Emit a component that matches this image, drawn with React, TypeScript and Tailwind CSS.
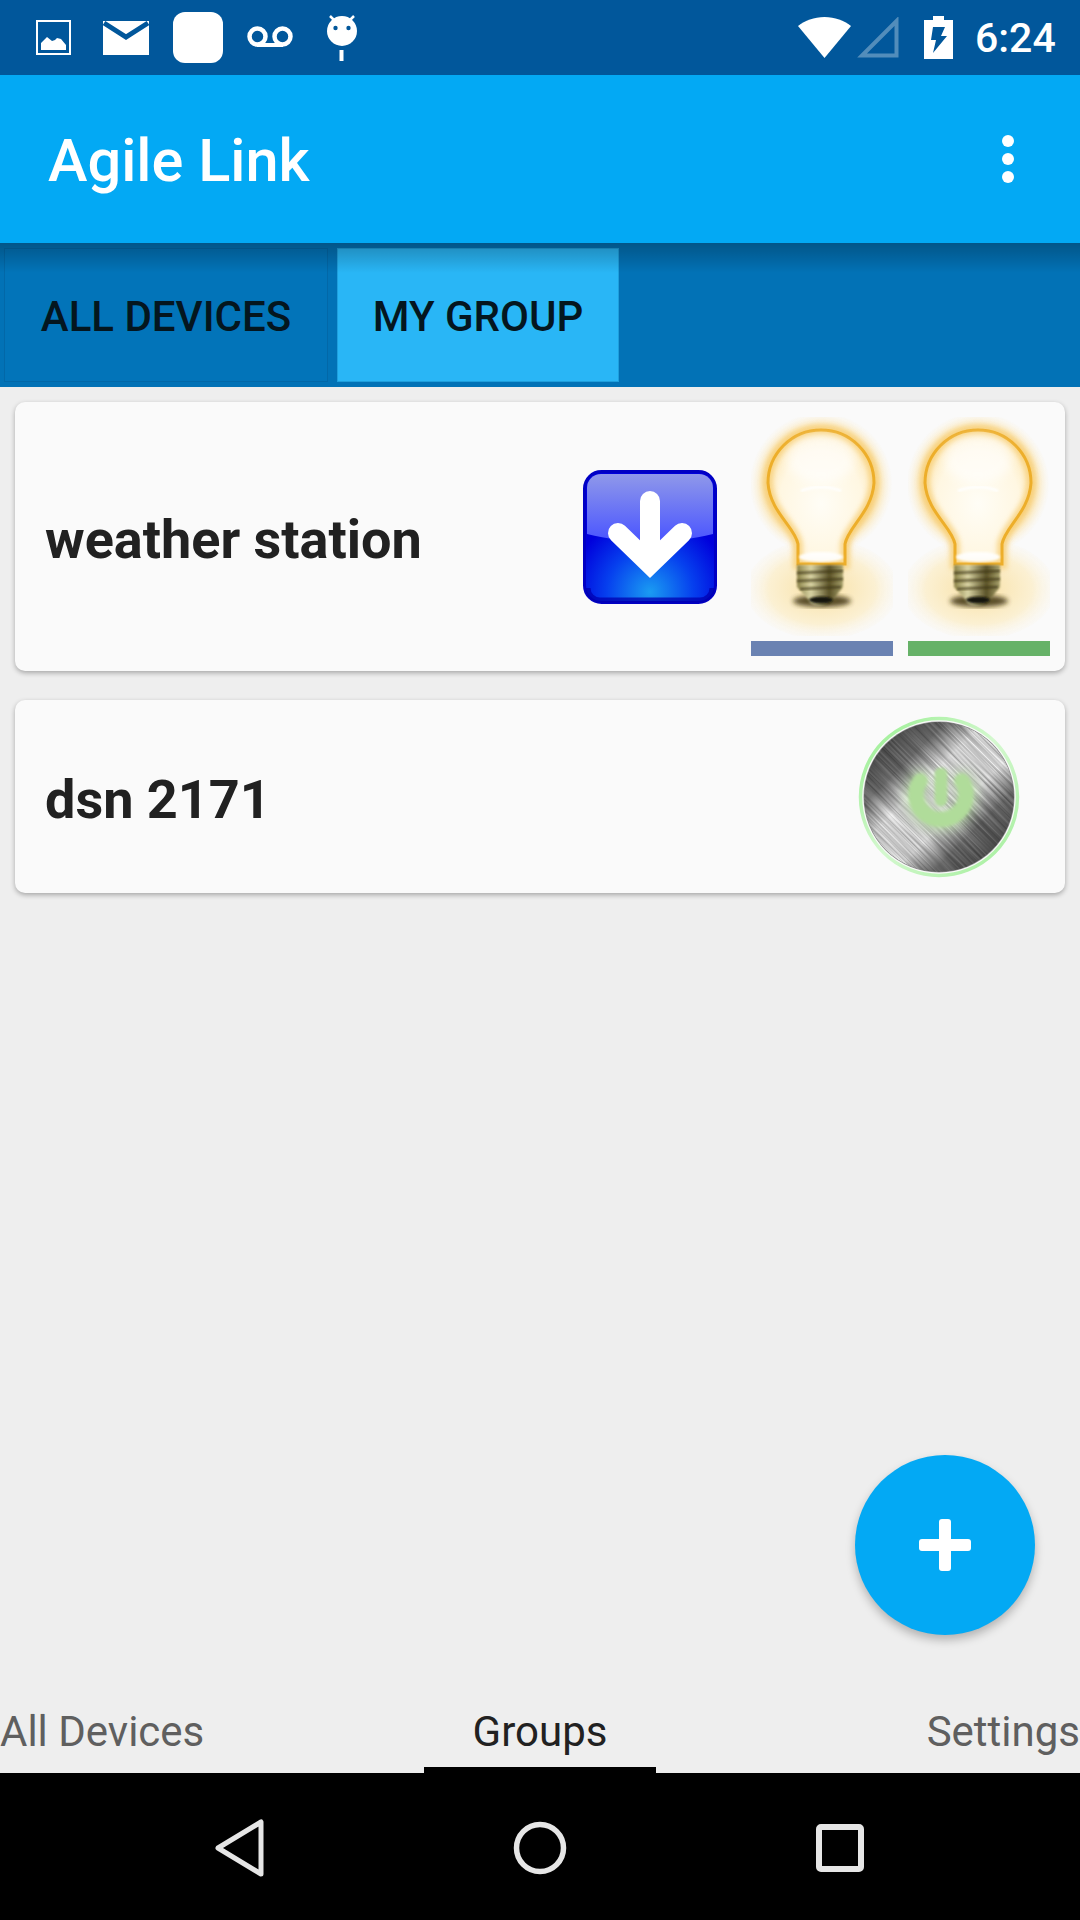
const StatusIcons = () => (
  <div className="flex items-center h-full pl-[36px]">
    <svg width="35" height="35" viewBox="0 0 35 35">
      <rect x="1" y="1" width="33" height="33" fill="none" stroke="#fff" strokeWidth="2" />
      <path d="M5 30V23l6-6 5 4 3-1 2-2 4 1 5 6v5z" fill="#fff" />
    </svg>
    <svg className="ml-[32px]" width="46" height="35" viewBox="0 0 46 35">
      <path d="M0 1h46v34H0z" fill="#fff" />
      <path d="M1 3l22 14L45 3" fill="none" stroke="#01579b" strokeWidth="5" />
    </svg>
    <div className="ml-[24px] w-[50px] h-[51px] bg-white rounded-[12px]" />
    <svg className="ml-[24px] mb-[2px]" width="46" height="21" viewBox="0 0 46 21">
      <circle cx="10.5" cy="10.5" r="8" fill="none" stroke="#fff" strokeWidth="4.500" />
      <circle cx="35.5" cy="10.5" r="8" fill="none" stroke="#fff" strokeWidth="4.500" />
      <path d="M10 19h26" stroke="#fff" strokeWidth="4" />
    </svg>
    <svg className="ml-[33px] mt-[1px]" width="32" height="46" viewBox="0 0 32 46">
      <path d="M4 1l6 6M28 1l-6 6" stroke="#fff" strokeWidth="2.5" />
      <circle cx="16" cy="16" r="15" fill="#fff" />
      <circle cx="9.5" cy="13" r="2.2" fill="#01579b" />
      <circle cx="22.5" cy="13" r="2.2" fill="#01579b" />
      <rect x="13.5" y="35" width="4" height="11" fill="#fff" />
    </svg>
    <svg className="ml-auto" width="53" height="41" viewBox="0 0 53 41">
      <path d="M26.5 41L0 9C7 3.500 16 0 26.500 0S46 3.500 53 9z" fill="#fff" />
    </svg>
    <svg className="ml-[6px]" width="42" height="41" viewBox="0 0 42 41">
      <path d="M39.500 4v34.500H5z" fill="none" stroke="#fff" strokeOpacity="0.32" strokeWidth="4" />
    </svg>
    <svg className="ml-[25px]" width="29" height="43" viewBox="0 0 29 43">
      <path d="M9 0h11v4h9v39H0V4h9z" fill="#fff" />
      <path d="M9 11h12l-4 9h6L9 37l3-13H7z" fill="#01579b" />
    </svg>
    <span className="ml-[22px] mr-[24px] w-[81px] text-[41px] leading-none font-medium text-white mt-[2px]">
      6:24
    </span>
  </div>
);

const DownloadButton = () => (
  <svg className="blur-[0.5px]" width="134" height="134" viewBox="0 0 134 134">
    <defs>
      <linearGradient id="btnTop" x1="0" y1="0" x2="0" y2="1">
        <stop offset="0" stopColor="#8f98ea" />
        <stop offset="1" stopColor="#4a55ff" />
      </linearGradient>
      <radialGradient id="btnLow" cx="0.5" cy="0.92" r="0.6">
        <stop offset="0" stopColor="#1a9cf2" />
        <stop offset="0.55" stopColor="#0640ee" />
        <stop offset="1" stopColor="#0000dc" />
      </radialGradient>
    </defs>
    <rect x="1.500" y="1.500" width="131" height="131" rx="17" fill="url(#btnLow)" stroke="#0000c4" strokeWidth="3" />
    <path d="M4 18a14 14 0 0 1 14-14h98a14 14 0 0 1 14 14v46c-20 5-40 7-63 7s-43-2-63-7z" fill="url(#btnTop)" />
    <path d="M5 118a12 12 0 0 0 12 12h100a12 12 0 0 0 12-12" fill="none" stroke="#0000b0" strokeWidth="5" opacity="0.75" />
    <path d="M67 31v56" stroke="#fff" strokeWidth="20" strokeLinecap="round" />
    <path d="M35 63l32 31 32-31" fill="none" stroke="#fff" strokeWidth="20" strokeLinecap="round" strokeLinejoin="miter" />
  </svg>
);

const Bulb = () => (
  <svg className="blur-[0.5px]" width="142" height="219" viewBox="0 0 142 219">
    <defs>
      <radialGradient id="halo" cx="0.5" cy="0.5" r="0.5">
        <stop offset="0.7" stopColor="#f5bf4f" stopOpacity="0.85" />
        <stop offset="0.84" stopColor="#fadf9f" stopOpacity="0.65" />
        <stop offset="1" stopColor="#fdf2d6" stopOpacity="0.04" />
      </radialGradient>
      <radialGradient id="floor" cx="0.5" cy="0.5" r="0.5">
        <stop offset="0" stopColor="#f8dc96" stopOpacity="0.85" />
        <stop offset="0.7" stopColor="#fbeecb" stopOpacity="0.85" />
        <stop offset="1" stopColor="#fbf5e6" stopOpacity="0.2" />
      </radialGradient>
      <radialGradient id="glass" cx="0.5" cy="0.55" r="0.65">
        <stop offset="0" stopColor="#fffdf6" />
        <stop offset="0.6" stopColor="#fff7e2" />
        <stop offset="0.85" stopColor="#fdeabd" />
        <stop offset="1" stopColor="#f8d68a" />
      </radialGradient>
      <linearGradient id="screw" x1="0" y1="0" x2="1" y2="0">
        <stop offset="0" stopColor="#8b8248" />
        <stop offset="0.3" stopColor="#d9d4a4" />
        <stop offset="0.7" stopColor="#5a5228" />
        <stop offset="1" stopColor="#a9a26c" />
      </linearGradient>
      <filter id="soft">
        <feGaussianBlur stdDeviation="1.2" />
      </filter>
      <filter id="mid">
        <feGaussianBlur stdDeviation="2.500" />
      </filter>
      <filter id="softer" x="-30%" y="-30%" width="160%" height="160%">
        <feGaussianBlur stdDeviation="5" />
      </filter>
    </defs>
    <ellipse cx="71" cy="172" rx="76" ry="50" fill="url(#floor)" />
    <circle cx="70" cy="67" r="71" fill="url(#halo)" />
    <path d="M38 92L47 140H94L103 92z" fill="#f6c65e" opacity="0.55" filter="url(#softer)" />
    <path
      d="M47 147V127C44 110 19 95 17 66A53 53 0 0 1 123 66C121 95 97 110 94 127V147z"
      fill="url(#glass)"
    />
    <path
      d="M47 147V127C44 110 19 95 17 66A53 53 0 0 1 123 66C121 95 97 110 94 127V147z"
      fill="none"
      stroke="#f7cd72"
      strokeWidth="10"
      opacity="0.75"
      filter="url(#mid)"
    />
    <path
      d="M47 147V127C44 110 19 95 17 66A53 53 0 0 1 123 66C121 95 97 110 94 127V147z"
      fill="none"
      stroke="#edae2a"
      strokeWidth="3"
    />
    <ellipse cx="70" cy="42" rx="34" ry="24" fill="#fff" opacity="0.6" filter="url(#softer)" />
    <path d="M50 74q20-8 40 0" fill="none" stroke="#fff" strokeWidth="2.500" opacity="0.95" filter="url(#soft)" />
    <ellipse cx="70" cy="140" rx="22" ry="5" fill="#fff" opacity="0.9" filter="url(#soft)" />
    <ellipse cx="71" cy="184" rx="29" ry="6" fill="#3c3010" opacity="0.85" filter="url(#mid)" />
    <path d="M46 148h46v22l-10 13a12 6 0 0 1-24 0l-12-13z" fill="url(#screw)" filter="url(#soft)" />
    <path d="M46 156l46-2M46 164l46-2M49 172l41-2" stroke="#3a3312" strokeWidth="2.500" opacity="0.7" filter="url(#soft)" />
    <ellipse cx="70" cy="183" rx="12" ry="3.500" fill="#17130a" filter="url(#soft)" />
  </svg>
);

const PowerDisc = () => (
  <svg width="166" height="166" viewBox="-83 -83 166 166">
    <defs>
      <linearGradient id="metal" x1="0.12" y1="0.12" x2="0.88" y2="0.88">
        <stop offset="0" stopColor="#555555" />
        <stop offset="0.2" stopColor="#787878" />
        <stop offset="0.37" stopColor="#f0f0f0" />
        <stop offset="0.63" stopColor="#eeeeee" />
        <stop offset="0.8" stopColor="#787878" />
        <stop offset="1" stopColor="#565656" />
      </linearGradient>
      <linearGradient id="rim" x1="0" y1="0" x2="1" y2="1">
        <stop offset="0" stopColor="#96ee8e" />
        <stop offset="0.5" stopColor="#d5f8d0" />
        <stop offset="1" stopColor="#a0ee98" />
      </linearGradient>
      <clipPath id="discClip">
        <circle r="75" />
      </clipPath>
      <filter id="grain" x="0" y="0" width="100%" height="100%">
        <feTurbulence type="fractalNoise" baseFrequency="0.012 0.55" numOctaves="2" seed="4" />
        <feColorMatrix values="0 0 0 0 0  0 0 0 0 0  0 0 0 0 0  1.600 0 0 0 -0.450" />
      </filter>
      <filter id="powerBlur" x="-40%" y="-40%" width="180%" height="180%">
        <feGaussianBlur stdDeviation="1.800" />
      </filter>
      <filter id="powerGlow" x="-60%" y="-60%" width="220%" height="220%">
        <feGaussianBlur stdDeviation="6" />
      </filter>
    </defs>
    <circle r="78.500" fill="#fafafa" stroke="url(#rim)" strokeWidth="3.500" />
    <circle r="75.500" fill="#909090" />
    <g clipPath="url(#discClip)">
      <circle r="75" fill="url(#metal)" />
      <g transform="rotate(45)">
        <rect x="-110" y="-110" width="220" height="220" filter="url(#grain)" opacity="0.45" />
      </g>
    </g>
    <g transform="translate(2 1)" fill="none" stroke="#b0dc9a" strokeLinecap="round">
      <g filter="url(#powerGlow)" opacity="0.65">
        <path d="M-21 -18A26 26 0 1 0 21 -18" strokeWidth="18" />
      </g>
      <g filter="url(#powerBlur)">
        <path d="M-21 -17A25 25 0 1 0 21 -17" strokeWidth="15" />
        <path d="M0 -24V2" strokeWidth="13" />
      </g>
    </g>
  </svg>
);

export default function App() {
  return (
    <div className="relative flex flex-col w-[1080px] h-[1920px] overflow-hidden bg-[#eeeeee] font-['Roboto',sans-serif]">
      <div className="h-[75px] bg-[#01579b]">
        <StatusIcons />
      </div>

      <header className="flex items-center justify-between h-[168px] bg-[#03a9f4] pl-[48px] pr-[66px]">
        <h1 className="pt-[5px] text-[59.500px] leading-none font-medium text-white">Agile Link</h1>
        <div className="flex flex-col gap-[6px]">
          <span className="w-[12px] h-[12px] rounded-full bg-white" />
          <span className="w-[12px] h-[12px] rounded-full bg-white" />
          <span className="w-[12px] h-[12px] rounded-full bg-white" />
        </div>
      </header>

      <nav className="relative flex h-[144px] pt-[5px] pl-[4px] gap-[9px] bg-[#0272b6]">
        <button className="w-[324px] h-[134px] pt-[3px] bg-[#0274b9] border border-[#0268a8] text-[42px] font-medium text-[#04161f]">
          ALL DEVICES
        </button>
        <button className="w-[282px] h-[134px] pt-[3px] bg-[#29b6f6] border border-[#1f9fdc] text-[42px] font-medium text-[#04161f]">
          MY GROUP
        </button>
        <div className="absolute inset-x-0 top-0 h-[30px] bg-gradient-to-b from-[#00000040] to-[#00000000]" />
      </nav>

      <main className="flex-1 flex flex-col gap-[29px] pt-[15px] px-[15px]">
        <section className="flex items-center h-[269px] pl-[30px] pr-[15px] rounded-[10px] bg-[#fafafa] shadow-[0_2px_5px_rgba(0,0,0,0.3)]">
          <h2 className="pt-[5px] text-[54px] font-bold text-[#212121]">weather station</h2>
          <div className="ml-auto mr-[34px]">
            <DownloadButton />
          </div>
          <div className="flex gap-[15px]">
            <div className="flex flex-col gap-[5px]">
              <Bulb />
              <div className="h-[15px] bg-[#6a82b2]" />
            </div>
            <div className="flex flex-col gap-[5px]">
              <Bulb />
              <div className="h-[15px] bg-[#66b268]" />
            </div>
          </div>
        </section>

        <section className="flex items-center justify-between h-[193px] pl-[30px] pr-[43px] rounded-[10px] bg-[#fafafa] shadow-[0_2px_5px_rgba(0,0,0,0.3)]">
          <h2 className="pt-[5px] text-[54px] font-bold text-[#212121]">dsn 2171</h2>
          <PowerDisc />
        </section>
      </main>

      <button className="absolute left-[855px] top-[1455px] flex items-center justify-center w-[180px] h-[180px] rounded-full bg-[#03a9f4] shadow-[0_5px_10px_rgba(0,0,0,0.25)]">
        <svg width="52" height="52" viewBox="0 0 52 52">
          <rect x="20" y="0" width="12" height="52" rx="3" fill="#fff" />
          <rect x="0" y="20" width="52" height="12" rx="3" fill="#fff" />
        </svg>
      </button>

      <div className="flex h-[93px] text-[42px] leading-[50px] text-[#5f5f5f]">
        <span className="flex-1 pt-[27px]">All Devices</span>
        <span className="flex justify-center w-[232px] pt-[27px] border-b-[6px] border-black text-[#212121]">
          Groups
        </span>
        <span className="flex-1 pt-[27px] text-right">Settings</span>
      </div>

      <div className="flex items-center h-[147px] pt-[3px] bg-black">
        <div className="flex items-center justify-center w-[360px]">
          <svg className="ml-[120px]" width="50" height="58" viewBox="0 0 50 58">
            <path d="M46 3v52L3 29z" fill="none" stroke="#e6e6e6" strokeWidth="5" strokeLinejoin="round" />
          </svg>
        </div>
        <div className="flex items-center justify-center w-[360px]">
          <svg width="54" height="54" viewBox="0 0 54 54">
            <circle cx="27" cy="27" r="23.500" fill="none" stroke="#e6e6e6" strokeWidth="5.500" />
          </svg>
        </div>
        <div className="flex items-center justify-center w-[360px]">
          <svg className="mr-[120px]" width="48" height="48" viewBox="0 0 48 48">
            <rect x="3" y="3" width="42" height="42" rx="2" fill="none" stroke="#e6e6e6" strokeWidth="6" />
          </svg>
        </div>
      </div>
    </div>
  );
}
